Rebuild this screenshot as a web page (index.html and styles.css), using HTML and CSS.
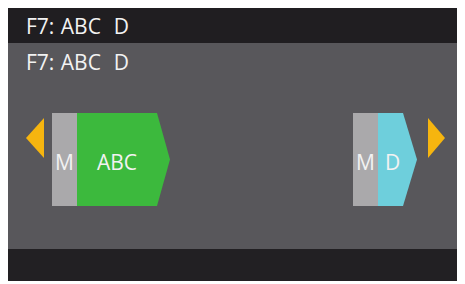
FILE: index.html
```html
<!DOCTYPE html>
<html>
<head>
<meta charset="utf-8">
<link rel="stylesheet" href="styles.css">
</head>
<body>
<div class="screen">
  <div class="topbar"><span class="title">F7: ABC&nbsp; D</span></div>
  <div class="main">
    <div class="title sub">F7: ABC&nbsp; D</div>
    <div class="row">
      <div class="arrow left"></div>
      <div class="block">
        <div class="mode">M</div>
        <div class="tag green wide">ABC</div>
      </div>
      <div class="spacer"></div>
      <div class="block">
        <div class="mode">M</div>
        <div class="tag cyan narrow">D</div>
      </div>
      <div class="arrow right"></div>
    </div>
  </div>
  <div class="bottombar"></div>
</div>
</body>
</html>
```
FILE: styles.css
```css
html, body {
  margin: 0;
  padding: 0;
  background: #ffffff;
}
.screen {
  margin: 8px 0 0 8px;
  width: 449px;
  height: 273px;
  display: flex;
  flex-direction: column;
  font-family: "Open Sans", "DejaVu Sans", sans-serif;
  color: #f2f2f2;
}
.topbar {
  height: 35px;
  background: #201e21;
  display: flex;
  align-items: center;
  padding-left: 18px;
}
.title {
  font-size: 21px;
  line-height: 26px;
  word-spacing: 1px;
}
.main {
  flex: 1;
  background: #58575b;
  display: flex;
  flex-direction: column;
}
.sub {
  padding: 6px 0 0 18px;
}
.row {
  display: flex;
  align-items: flex-start;
  padding: 38px 12px 0 18px;
}
.arrow {
  width: 18px;
  height: 40px;
  background: #f6b50f;
  margin-top: 5px;
}
.arrow.left {
  clip-path: polygon(100% 0, 100% 100%, 0 50%);
  margin-right: 8px;
}
.arrow.right {
  clip-path: polygon(0 0, 100% 50%, 0 100%);
  margin-left: 11px;
  width: 17px;
}
.block {
  display: flex;
  height: 93px;
}
.mode {
  width: 25px;
  background: #aaa9ab;
  display: flex;
  align-items: center;
  justify-content: center;
  font-size: 21px;
  padding-top: 4px;
  box-sizing: border-box;
}
.tag {
  display: flex;
  align-items: center;
  font-size: 21px;
  padding-top: 4px;
  box-sizing: border-box;
}
.green {
  background: #3cb93d;
  width: 93px;
  padding-right: 13px;
  justify-content: center;
  clip-path: polygon(0 0, 80px 0, 100% 50%, 80px 100%, 0 100%);
}
.cyan {
  background: #6ecfdc;
  width: 39px;
  padding-left: 7px;
  clip-path: polygon(0 0, 25px 0, 100% 50%, 25px 100%, 0 100%);
}
.spacer {
  flex: 1;
}
.bottombar {
  height: 32px;
  background: #222023;
}
```
